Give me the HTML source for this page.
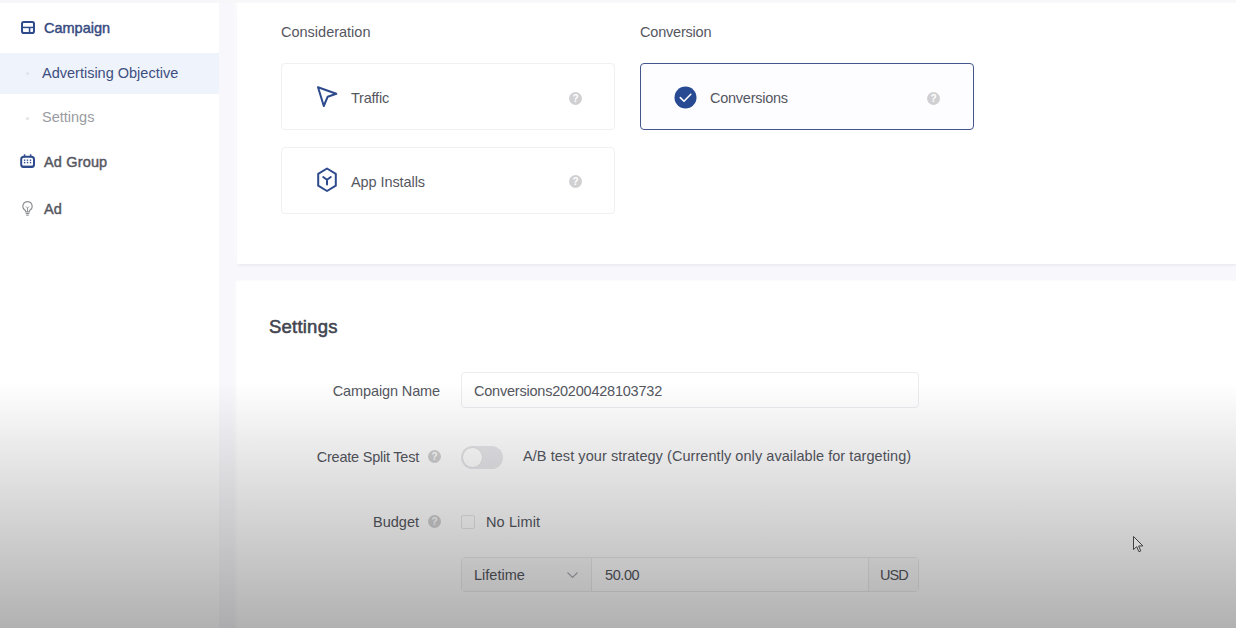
<!DOCTYPE html>
<html><head><meta charset="utf-8">
<style>
*{box-sizing:border-box;margin:0;padding:0}
html,body{width:1236px;height:628px;overflow:hidden;background:#f8f8fc;font-family:"Liberation Sans",sans-serif;color:#4a4c58}
.abs{position:absolute}
#top{left:0;top:0;width:1236px;height:3px;background:#f7f7f9}
#side{left:0;top:3px;width:219px;height:625px;background:#fff}
#sel{left:0;top:53px;width:219px;height:41px;background:#eff3fc}
.nav{font-size:14.500px;letter-spacing:0;-webkit-text-stroke:.45px currentColor;color:#56575f;white-space:nowrap;line-height:20px}
.sub{font-size:14.5px;white-space:nowrap;line-height:20px}
#p1{left:237px;top:3px;width:1000px;height:260.500px;background:#fff;box-shadow:0 2px 3px -1px rgba(205,208,225,.55),-1px 0 3px #fff}
#p2{left:237px;top:281px;width:1000px;height:347px;background:#fff;box-shadow:-1px 0 3px #fff}
.lbl{font-size:14.5px;color:#55575f;white-space:nowrap;line-height:20px}
.card{border:1px solid #f0f0f3;border-radius:4px;background:#fff}
.q{width:13.500px;height:13.500px;margin:-.25px 0 0 -.25px;border-radius:50%;background:#d0d0d2;color:#fff;font-size:10px;font-weight:bold;text-align:center;line-height:13.500px}
#grad{left:0;top:382px;width:1236px;height:246px;background:linear-gradient(to bottom,rgba(0,0,0,0) 0%,rgba(0,0,0,.12) 39%,rgba(0,0,0,.205) 66.700%,rgba(0,0,0,.305) 100%);pointer-events:none}
</style></head><body>
<div class="abs" id="side"></div>
<div class="abs" id="top"></div>
<div class="abs" id="sel"></div>

<svg class="abs" style="left:20.600px;top:20.900px" width="14" height="13" viewBox="0 0 14 13"><rect x="1" y="1" width="12" height="11" rx="1.800" fill="none" stroke="#2d4a8c" stroke-width="2"/><rect x="1" y="5.700" width="12" height="1.500" fill="#2d4a8c"/><rect x="7.800" y="6.500" width="1.600" height="5.500" fill="#2d4a8c"/></svg>
<div class="abs nav" style="left:44px;top:18px;color:#364a80">Campaign</div>
<div class="abs" style="left:26px;top:72px;width:3px;height:3px;border-radius:50%;background:#dfe4ef"></div>
<div class="abs sub" style="left:42px;top:63px;color:#3d4f80">Advertising Objective</div>
<div class="abs" style="left:26px;top:117px;width:3px;height:3px;border-radius:50%;background:#e3e3e6"></div>
<div class="abs sub" style="left:42px;top:107px;color:#9a9ba1">Settings</div>

<svg class="abs" style="left:20px;top:153px" width="16" height="16" viewBox="0 0 16 16"><rect x="1.200" y="3.700" width="12.800" height="10.400" rx="2.600" fill="#fff" stroke="#2d4a8c" stroke-width="2"/><rect x="2" y="12.600" width="11.200" height="1.800" fill="#2d4a8c"/><rect x="3.800" y="1.300" width="1.500" height="3" fill="#2d4a8c"/><rect x="9.900" y="1.300" width="1.500" height="3" fill="#2d4a8c"/><g fill="#2d4a8c"><rect x="3.9" y="6.5" width="1.400" height="1.400"/><rect x="6.8" y="6.5" width="1.400" height="1.400"/><rect x="9.8" y="6.5" width="1.400" height="1.400"/><rect x="3.9" y="8.9" width="1.400" height="1.400"/><rect x="6.8" y="8.9" width="1.400" height="1.400"/><rect x="9.8" y="8.9" width="1.400" height="1.400"/></g></svg>
<div class="abs nav" style="left:44px;top:152px;letter-spacing:.16px">Ad Group</div>

<svg class="abs" style="left:20px;top:200px" width="15" height="17" viewBox="0 0 15 17"><path d="M7.5 1.6a4.6 4.6 0 0 0-2.6 8.4c.5.4.8.9.8 1.5v.3h3.6v-.3c0-.6.3-1.100.8-1.500A4.600 4.600 0 0 0 7.500 1.600z" fill="none" stroke="#8f9096" stroke-width="1.200"/><path d="M5.700 13.500h3.600M6.300 15.200h2.400" stroke="#8f9096" stroke-width="1.200" fill="none"/><path d="M6 6.500l1.500 1.600L9 6.500M7.500 8v3.500" stroke="#8f9096" stroke-width=".9" fill="none"/></svg>
<div class="abs nav" style="left:44px;top:199px;letter-spacing:.2px">Ad</div>

<div class="abs" id="p1"></div>
<div class="abs" id="p2"></div>

<div class="abs lbl" style="left:281px;top:22px">Consideration</div>
<div class="abs lbl" style="left:640px;top:22px;letter-spacing:-.2px">Conversion</div>

<div class="abs card" style="left:281px;top:63px;width:334px;height:67px"></div>
<svg class="abs" style="left:314px;top:84px" width="26" height="26" viewBox="0 0 26 26"><path d="M4 3.300L22.300 9.800L13.700 12.700L9.800 22Z" fill="none" stroke="#2d4a8c" stroke-width="2" stroke-linejoin="round"/></svg>
<div class="abs lbl" style="left:351px;top:88px;letter-spacing:-.22px">Traffic</div>
<div class="abs q" style="left:569px;top:92px">?</div>

<div class="abs card" style="left:281px;top:147px;width:334px;height:67px"></div>
<svg class="abs" style="left:314px;top:166px" width="26" height="28" viewBox="0 0 26 28"><path d="M13 2.500L21.800 7.800v11.900L13 25L4.200 19.700V7.800Z" fill="none" stroke="#2d4a8c" stroke-width="2" stroke-linejoin="round"/><path d="M9.200 11L13 13.700L16.800 11M13 13.700V18.400" fill="none" stroke="#2d4a8c" stroke-width="2" stroke-linecap="round" stroke-linejoin="round"/></svg>
<div class="abs lbl" style="left:351px;top:172px;letter-spacing:-.08px">App Installs</div>
<div class="abs q" style="left:569px;top:175px">?</div>

<div class="abs card" style="left:640px;top:63px;width:334px;height:67px;border-color:#44578c;background:#fdfdff"></div>
<svg class="abs" style="left:674px;top:85.500px" width="23" height="23" viewBox="0 0 23 23"><circle cx="11.500" cy="11.500" r="11" fill="#284a93"/><path d="M6.300 11.600l3.700 3.700l6.800-7" fill="none" stroke="#fff" stroke-width="1.600" stroke-linecap="round" stroke-linejoin="round"/></svg>
<div class="abs lbl" style="left:710px;top:88px;letter-spacing:-.25px">Conversions</div>
<div class="abs q" style="left:927px;top:92px">?</div>

<div class="abs ttl" style="left:269px;top:314.500px;font-size:18.500px;letter-spacing:.22px;-webkit-text-stroke:.55px #434550;color:#434550;line-height:24px">Settings</div>

<div class="abs lbl" style="left:240px;top:381px;width:200px;text-align:right;letter-spacing:-.12px">Campaign Name</div>
<div class="abs card" style="left:461px;top:372px;width:458px;height:36px;border-color:#ebecf0"></div>
<div class="abs lbl" style="left:474px;top:381px;letter-spacing:-.22px">Conversions20200428103732</div>

<div class="abs lbl" style="left:219px;top:447px;width:200px;text-align:right;letter-spacing:-.23px">Create Split Test</div>
<div class="abs q" style="left:428px;top:450px">?</div>
<div class="abs" style="left:461px;top:446px;width:42px;height:23px;border-radius:12px;background:#e7e7eb"></div>
<div class="abs" style="left:462px;top:447px;width:21px;height:21px;border-radius:50%;background:#fff;border:1px solid #e0e0e4"></div>
<div class="abs lbl" style="left:523px;top:446px;letter-spacing:.06px">A/B test your strategy (Currently only available for targeting)</div>

<div class="abs lbl" style="left:219px;top:512px;width:200px;text-align:right">Budget</div>
<div class="abs q" style="left:428px;top:515px">?</div>
<div class="abs" style="left:461px;top:515px;width:14px;height:14px;border:1px solid #e6e6ea;border-radius:2px;background:#fff"></div>
<div class="abs lbl" style="left:486px;top:512px;letter-spacing:.12px">No Limit</div>

<div class="abs card" style="left:461px;top:557px;width:458px;height:35px;border-color:#ebebef;background:#fff"></div>
<div class="abs" style="left:462px;top:558px;width:130px;height:33px;background:#fbfbfc;border-right:1px solid #ebebef"></div>
<div class="abs" style="left:868px;top:558px;width:50px;height:33px;background:#fbfbfc;border-left:1px solid #ebebef"></div>
<div class="abs lbl" style="left:474px;top:565px">Lifetime</div>
<svg class="abs" style="left:566px;top:571px" width="13" height="8" viewBox="0 0 13 8"><path d="M1.500 1.500l5 5l5-5" fill="none" stroke="#a9abb1" stroke-width="1.100"/></svg>
<div class="abs lbl" style="left:605px;top:565px;letter-spacing:-.4px">50.00</div>
<div class="abs lbl" style="left:880px;top:565px;letter-spacing:-.9px">USD</div>

<div class="abs" id="grad"></div>
<svg class="abs" style="left:1132px;top:535px" width="13" height="19" viewBox="0 0 13 19"><path d="M1.500 1.500v13l3.200-2.800l2.200 5l1.900-.8l-2.200-4.900l4.300-.1z" fill="rgba(255,255,255,.22)" stroke="#303030" stroke-width=".9" stroke-linejoin="round"/></svg>
</body></html>
